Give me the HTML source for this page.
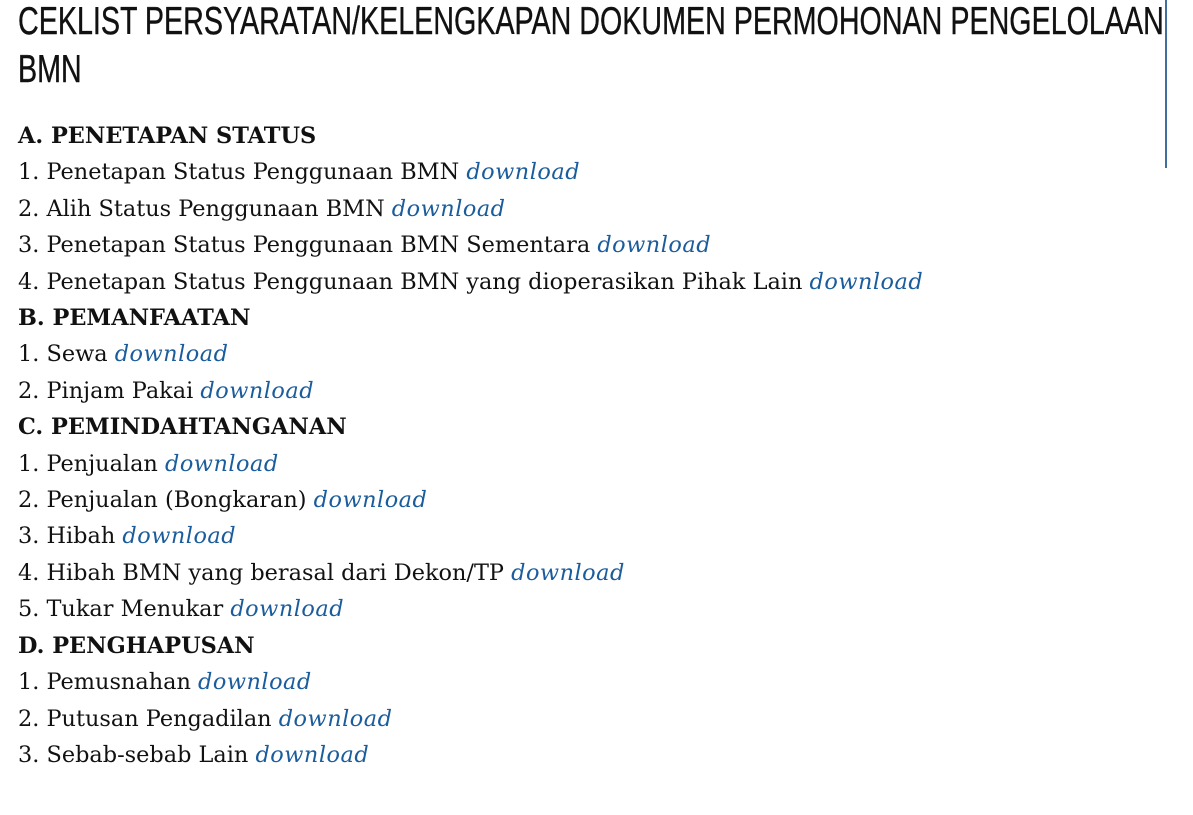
<!DOCTYPE html>
<html><head><meta charset="utf-8"><style>
html,body{margin:0;padding:0;background:#fff;width:1193px;height:815px;overflow:hidden;position:relative}
.t{position:absolute;left:18px;font-family:"Liberation Sans",sans-serif;font-size:39px;line-height:52px;color:#111;white-space:nowrap;transform-origin:0 0;transform:scaleX(0.735);-webkit-text-stroke:0.4px #111}
.vl{position:absolute;left:1165px;top:0;width:2px;height:168px;background:#3f6f9f}
.c{position:absolute;left:18px;top:118px;font-family:"DejaVu Serif",serif;font-size:22.4px;line-height:36.4px;color:#111}
.c div{white-space:nowrap}
b{font-weight:bold}
i{color:#1b5d9c;font-style:italic;letter-spacing:0.5px}
</style></head><body>
<div class="t" style="top:-4px">CEKLIST PERSYARATAN/KELENGKAPAN DOKUMEN PERMOHONAN PENGELOLAAN</div>
<div class="t" style="top:44px">BMN</div>
<div class="vl"></div>
<div class="c">
<div><b>A. PENETAPAN STATUS</b></div>
<div>1. Penetapan Status Penggunaan BMN <i>download</i></div>
<div>2. Alih Status Penggunaan BMN <i>download</i></div>
<div>3. Penetapan Status Penggunaan BMN Sementara <i>download</i></div>
<div>4. Penetapan Status Penggunaan BMN yang dioperasikan Pihak Lain <i>download</i></div>
<div><b>B. PEMANFAATAN</b></div>
<div>1. Sewa <i>download</i></div>
<div>2. Pinjam Pakai <i>download</i></div>
<div><b>C. PEMINDAHTANGANAN</b></div>
<div>1. Penjualan <i>download</i></div>
<div>2. Penjualan (Bongkaran) <i>download</i></div>
<div>3. Hibah <i>download</i></div>
<div>4. Hibah BMN yang berasal dari Dekon/TP <i>download</i></div>
<div>5. Tukar Menukar <i>download</i></div>
<div><b>D. PENGHAPUSAN</b></div>
<div>1. Pemusnahan <i>download</i></div>
<div>2. Putusan Pengadilan <i>download</i></div>
<div>3. Sebab-sebab Lain <i>download</i></div>
</div>
</body></html>
